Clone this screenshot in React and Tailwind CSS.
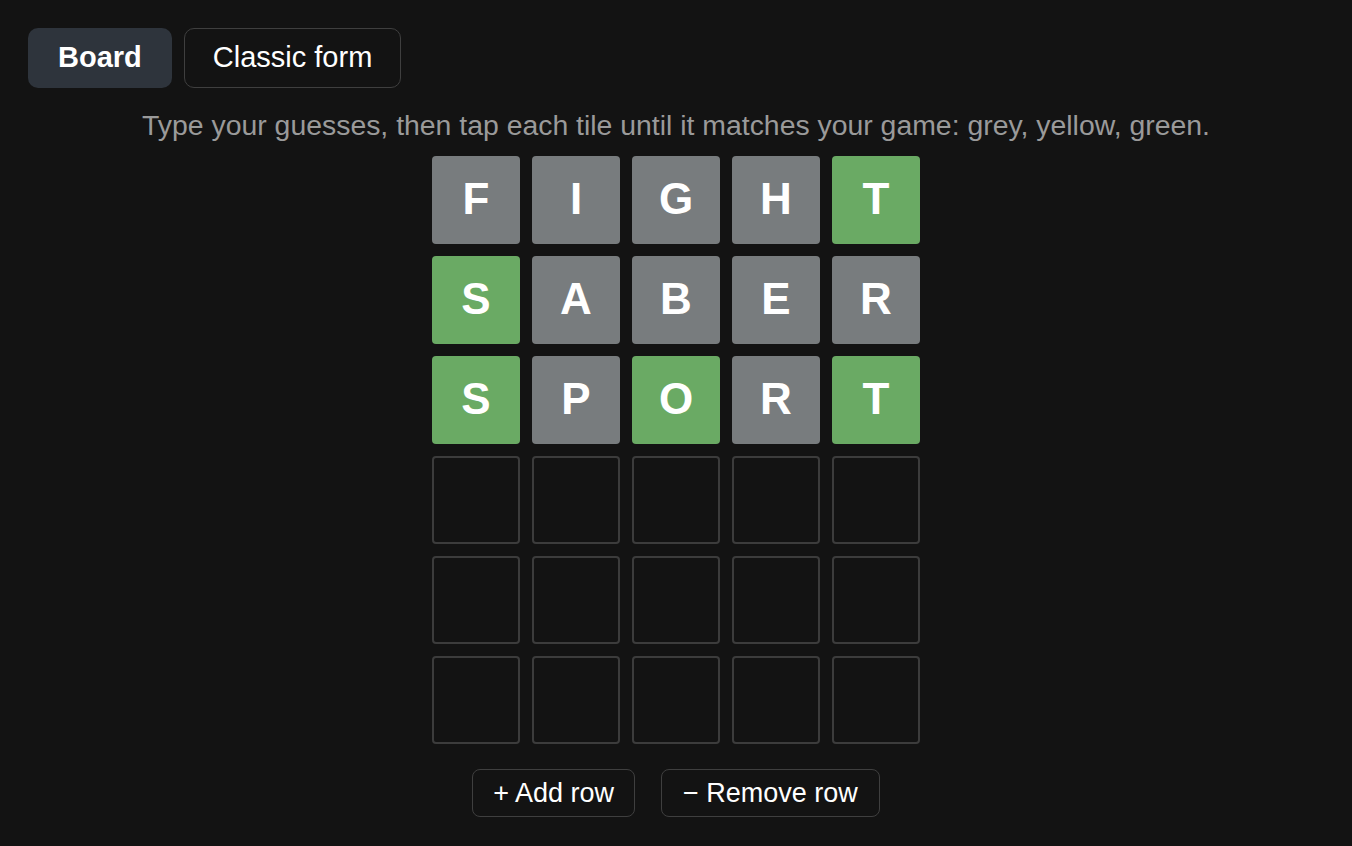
import { useState } from "react";

const GRAY = "bg-[#787c7e]";
const GREEN = "bg-[#6aaa64]";

const initialRows = [
  [
    ["F", "g"],
    ["I", "g"],
    ["G", "g"],
    ["H", "g"],
    ["T", "G"],
  ],
  [
    ["S", "G"],
    ["A", "g"],
    ["B", "g"],
    ["E", "g"],
    ["R", "g"],
  ],
  [
    ["S", "G"],
    ["P", "g"],
    ["O", "G"],
    ["R", "g"],
    ["T", "G"],
  ],
];

const Tile = ({ letter, state }) => {
  if (!letter) {
    return <div className="w-[88px] h-[88px] rounded-[4px] border-2 border-[#3c3c3c]" />;
  }
  return (
    <div
      className={`w-[88px] h-[88px] rounded-[4px] flex items-center justify-center pb-[3px] text-white font-bold text-[44px] ${
        state === "G" ? GREEN : GRAY
      }`}
    >
      {letter}
    </div>
  );
};

const App = () => {
  const [tab, setTab] = useState("board");
  const rows = [...initialRows, null, null, null];

  return (
    <main
      className="min-h-[846px] bg-[#131313] text-white px-7 pt-7"
      style={{ fontFamily: '"Liberation Sans", Arial, sans-serif' }}
    >
      <div className="flex gap-3">
        <button
          onClick={() => setTab("board")}
          className={`h-[60px] px-[30px] rounded-[10px] text-[29px] font-bold ${
            tab === "board" ? "bg-[#2e343c]" : "border border-[#3a3a3a]"
          }`}
        >
          Board
        </button>
        <button
          onClick={() => setTab("classic")}
          className="h-[60px] px-[28px] rounded-[10px] text-[29px] border border-[#3f3f3f]"
        >
          Classic form
        </button>
      </div>

      <p className="text-center text-[28.4px] text-[#9a9a9a] mt-[20px] leading-[34px]">
        Type your guesses, then tap each tile until it matches your game: grey, yellow, green.
      </p>

      <div className="flex flex-col items-center gap-3 mt-[14px]">
        {rows.map((row, i) => (
          <div key={i} className="flex gap-3">
            {row
              ? row.map(([l, s], j) => <Tile key={j} letter={l} state={s} />)
              : [0, 1, 2, 3, 4].map((j) => <Tile key={j} />)}
          </div>
        ))}
      </div>

      <div className="flex justify-center gap-[26px] mt-[25px]">
        <button className="h-[48px] px-5 rounded-[8px] border border-[#3f3f3f] text-[27px]">
          + Add row
        </button>
        <button className="h-[48px] px-[21px] rounded-[8px] border border-[#3f3f3f] text-[27px]">
          − Remove row
        </button>
      </div>
    </main>
  );
};

export default App;
